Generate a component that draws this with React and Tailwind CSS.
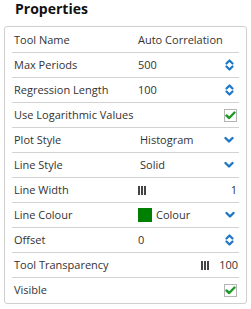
const ROWS = [
  { label: 'Tool Name', value: 'Auto Correlation' },
  { label: 'Max Periods', value: '500', control: 'spin' },
  { label: 'Regression Length', value: '100', control: 'spin' },
  { label: 'Use Logarithmic Values', control: 'check' },
  { label: 'Plot Style', value: 'Histogram', control: 'select' },
  { label: 'Line Style', value: 'Solid', control: 'select' },
  { label: 'Line Width', control: 'width' },
  { label: 'Line Colour', control: 'colour' },
  { label: 'Offset', value: '0', control: 'spin' },
  { label: 'Tool Transparency', control: 'transparency' },
  { label: 'Visible', control: 'check' },
];

function Spin() {
  return (
    <svg width="9" height="12" viewBox="0 0 9 12" fill="none">
      <path d="M1.5 4.5L4.5 1.5L7.5 4.5" stroke="#1f77c4" strokeWidth="2.2" strokeLinecap="round" strokeLinejoin="round" />
      <path d="M1.5 7.5L4.5 10.5L7.5 7.5" stroke="#1f77c4" strokeWidth="2.2" strokeLinecap="round" strokeLinejoin="round" />
    </svg>
  );
}

function Chevron() {
  return (
    <svg width="10" height="8" viewBox="0 0 10 8" fill="none">
      <path d="M1.5 2L5 5.5L8.5 2" stroke="#1f77c4" strokeWidth="2.4" strokeLinecap="round" strokeLinejoin="round" />
    </svg>
  );
}

function Check() {
  return (
    <div className="w-[13px] h-[13px] border border-[#b5b5b5] bg-white flex items-center justify-center">
      <svg width="11" height="9" viewBox="0 0 11 9" fill="none">
        <path d="M1.5 4.5L4.2 7L9.5 1.5" stroke="#1e9a2a" strokeWidth="2.4" strokeLinecap="round" strokeLinejoin="round" />
      </svg>
    </div>
  );
}

function Bars() {
  return (
    <div className="flex gap-[1px] h-[9px]">
      <div className="w-[2px] bg-[#444]" />
      <div className="w-[2px] bg-[#444]" />
      <div className="w-[2px] bg-[#444]" />
    </div>
  );
}

function Value({ row }) {
  if (row.control === 'width') {
    return (
      <div className="flex-1 flex items-center justify-between pr-[2px]">
        <Bars />
        <span>1</span>
      </div>
    );
  }
  if (row.control === 'transparency') {
    return (
      <div className="flex-1 flex items-center justify-end gap-[10px] pr-[1px]">
        <Bars />
        <span>100</span>
      </div>
    );
  }
  if (row.control === 'colour') {
    return (
      <div className="flex-1 flex items-center pr-[4px]">
        <div className="w-[14px] h-[14px] bg-[#008000] mr-[4px]" />
        <span className="flex-1">Colour</span>
        <Chevron />
      </div>
    );
  }
  return (
    <div className={'flex-1 flex items-center ' + (row.control ? 'pr-[5px]' : '')}>
      <span className={'flex-1 ' + (row.control === 'select' ? 'pl-[2px]' : '')}>{row.value}</span>
      {row.control === 'spin' && <Spin />}
      {row.control === 'select' && <Chevron />}
    </div>
  );
}

export default function App() {
  return (
    <div className="w-[251px] h-[309px] bg-white text-[#333] font-['Open_Sans',sans-serif] pl-[4px] pr-[4px]">
      <h1 className="h-[26px] pl-[11px] text-[14px] font-bold text-[#111] leading-[18px]">Properties</h1>
      <div className="border border-[#cfcfcf] rounded-[3px] px-[7px] pt-[1px] h-[278px]">
        {ROWS.map((row, i) => (
          <div
            key={row.label}
            className={'flex items-center h-[25px] pl-[2px] text-[11px] whitespace-nowrap ' + (i < ROWS.length - 1 ? 'border-b border-[#d2d2d2]' : '')}
          >
            {row.control === 'check' ? (
              <>
                <span className="flex-1">{row.label}</span>
                <div className="shrink-0 pr-[2px]">
                  <Check />
                </div>
              </>
            ) : (
              <>
                <span className="w-[124px] shrink-0">{row.label}</span>
                <Value row={row} />
              </>
            )}
          </div>
        ))}
      </div>
    </div>
  );
}
